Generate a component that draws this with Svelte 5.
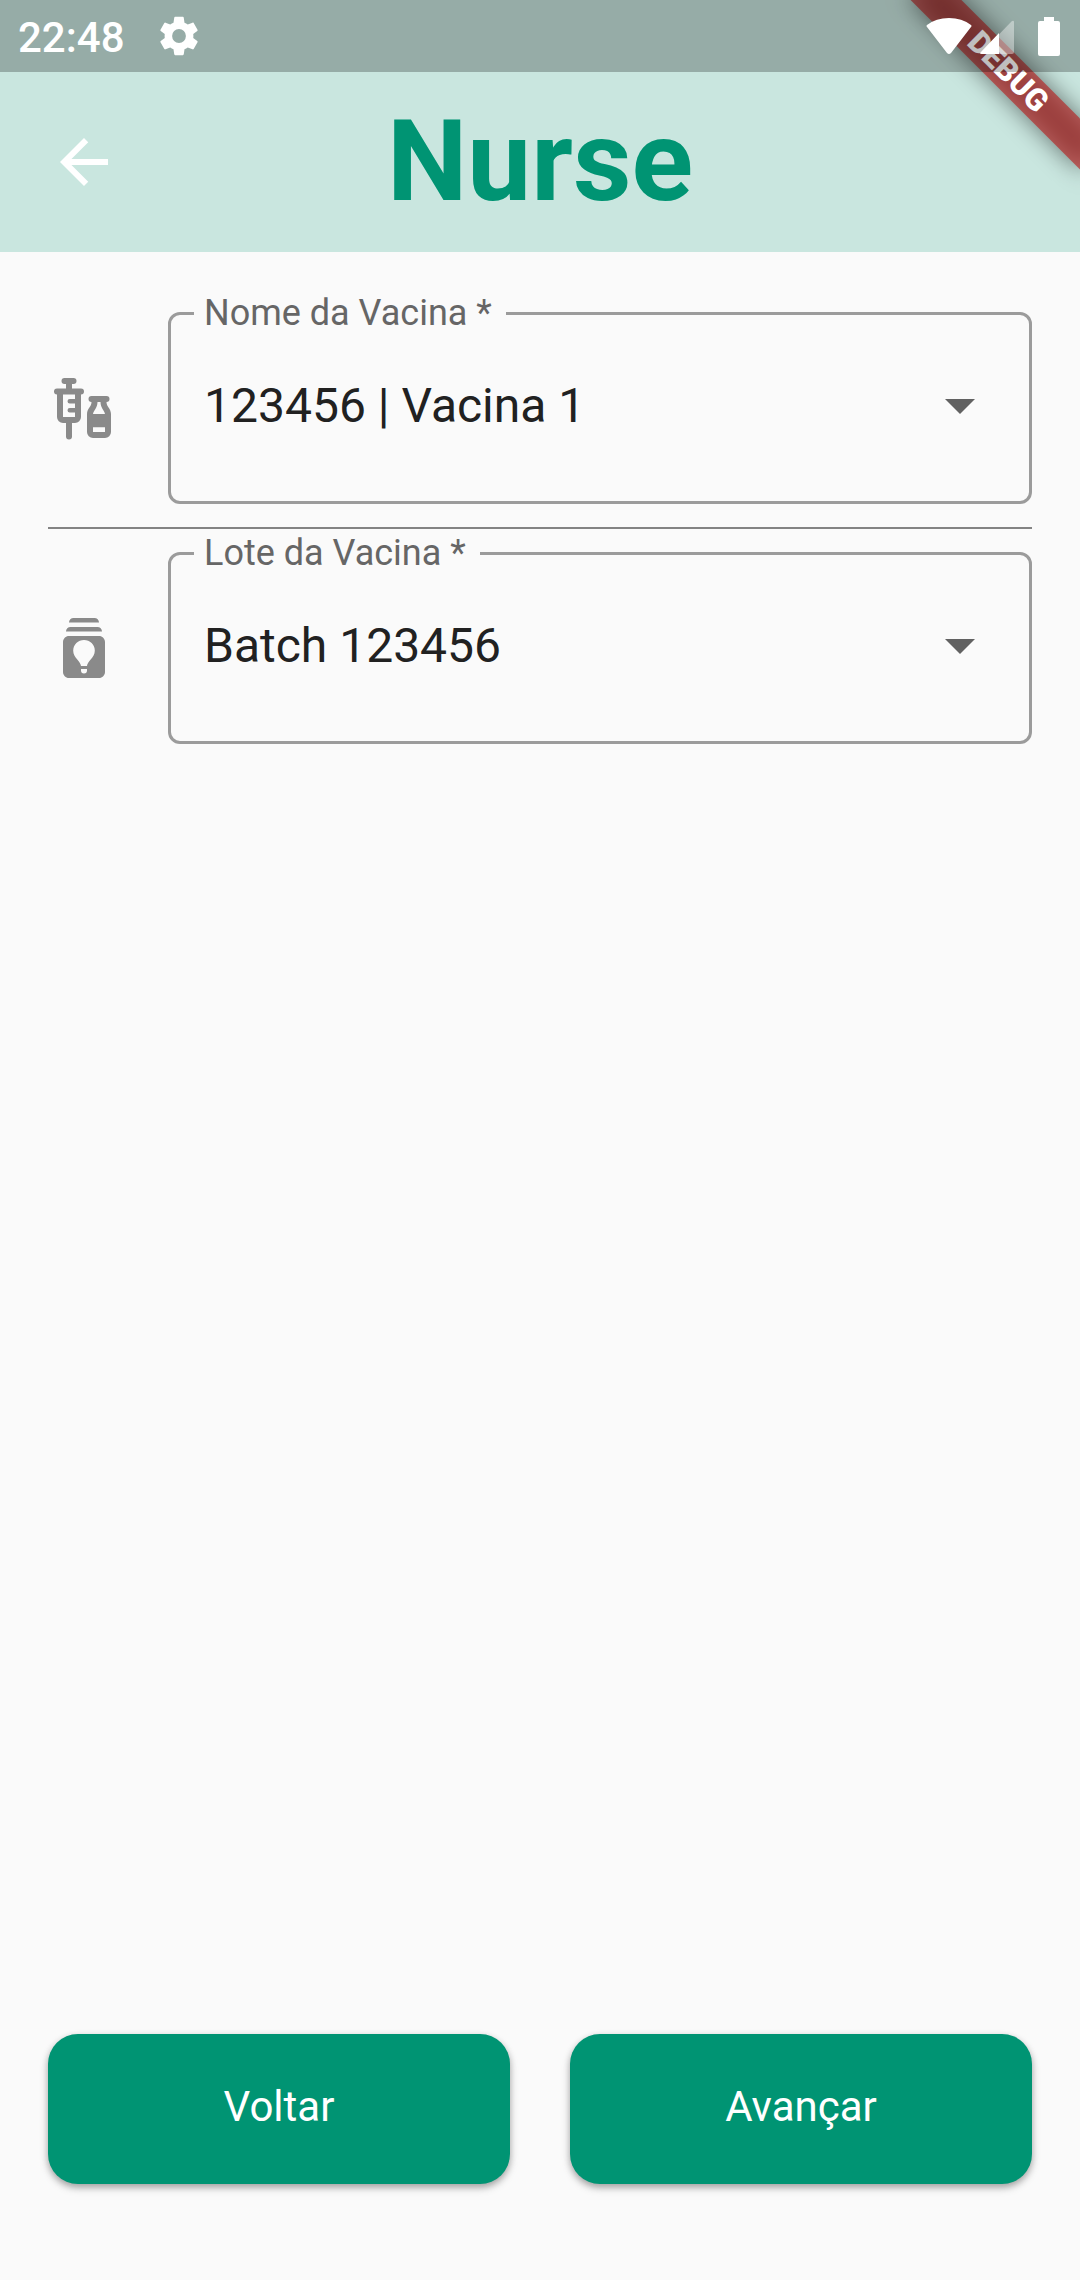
<script>
  const fields = [
    { id: 'vaccine', label: 'Nome da Vacina *', options: ['123456 | Vacina 1'] },
    { id: 'batch', label: 'Lote da Vacina *', options: ['Batch 123456'] }
  ];
</script>

<div class="page">
  <header>
    <div class="status">
      <span class="time">22:48</span>
      <svg class="gear" viewBox="0 0 24 24" aria-hidden="true">
        <path d="M19.43 12.98c.04-.32.07-.64.07-.98s-.03-.66-.07-.98l2.11-1.65c.19-.15.24-.42.12-.64l-2-3.46c-.12-.22-.39-.3-.61-.22l-2.49 1c-.52-.4-1.08-.73-1.69-.98l-.38-2.65A.49.49 0 0 0 14 2h-4c-.25 0-.46.18-.49.42l-.38 2.65c-.61.25-1.17.59-1.69.98l-2.49-1c-.23-.09-.49 0-.61.22l-2 3.46c-.13.22-.07.49.12.64l2.11 1.65c-.04.32-.07.65-.07.98s.03.66.07.98l-2.11 1.65c-.19.15-.24.42-.12.64l2 3.46c.12.22.39.3.61.22l2.49-1c.52.4 1.08.73 1.69.98l.38 2.65c.03.24.24.42.49.42h4c.25 0 .46-.18.49-.42l.38-2.65c.61-.25 1.17-.59 1.69-.98l2.49 1c.23.09.49 0 .61-.22l2-3.46c.12-.22.07-.49-.12-.64l-2.11-1.65zM12 15.6a3.6 3.6 0 1 1 0-7.2 3.6 3.6 0 0 1 0 7.2z" />
      </svg>
      <span class="grow"></span>
      <svg class="wifi" viewBox="0 0 46 36" aria-hidden="true">
        <path d="M1 7Q10 0 23 0t22 7q1 1 0 2L25 35q-2 2-4 0L1 9q-1-1 0-2z" />
      </svg>
      <svg class="signal" viewBox="0 0 34 34" aria-hidden="true">
        <path opacity=".4" d="M0 34 32 1q2-1 2 1v30q0 2-2 2z" />
        <path d="M19 13v21H2q-3 0-1-2z" />
      </svg>
      <svg class="battery" viewBox="0 0 22 39" aria-hidden="true">
        <path d="M6 0h10v4h4q2 0 2 2v31q0 2-2 2H2q-2 0-2-2V6q0-2 2-2h4z" />
      </svg>
    </div>
    <div class="appbar">
      <button class="back" aria-label="Voltar à tela anterior">
        <svg viewBox="0 0 24 24" aria-hidden="true">
          <path d="M20 11H7.83l5.59-5.59L12 4l-8 8 8 8 1.41-1.41L7.83 13H20z" />
        </svg>
      </button>
      <h1>Nurse</h1>
    </div>
    <div class="corner">
      <div class="ribbon">DEBUG</div>
    </div>
  </header>

  <main>
    {#each fields as field, i}
      {#if i > 0}<hr />{/if}
      <div class="row">
        {#if field.id === 'vaccine'}
          <svg class="lead" viewBox="0 0 24 24" aria-hidden="true">
            <path fill-rule="evenodd" d="M11 5.5H8V4h.5a1 1 0 0 0 0-2h-3a1 1 0 0 0 0 2H6v1.5H3a1 1 0 0 0 0 2V15a2 2 0 0 0 2 2h1v4.5a1 1 0 0 0 2 0V17h1a2 2 0 0 0 2-2V7.5a1 1 0 0 0 0-2zM9 9H7.25a.75.75 0 0 0 0 1.5H9V12H7.25a.75.75 0 0 0 0 1.5H9V15H5V7.5h4z" />
            <path fill-rule="evenodd" d="M19.5 10a1 1 0 0 0 0-2h-5a1 1 0 0 0 0 2c0 1.6-1.5 2.2-1.5 4v6a2 2 0 0 0 2 2h4a2 2 0 0 0 2-2v-6c0-1.8-1.5-2.4-1.5-4zm-3 0h1c0 2 1.2 2.6 1.5 4h-4c.3-1.4 1.5-2 1.5-4zM15 18.4h4V20h-4z" />
          </svg>
        {:else}
          <svg class="lead" viewBox="0 0 24 24" aria-hidden="true">
            <path d="M17 8H7c-1.1 0-2 .9-2 2v10c0 1.1.9 2 2 2h10c1.1 0 2-.9 2-2V10c0-1.1-.9-2-2-2zm-4 11.5a1 1 0 0 1-2 0V19h2zm0-1.5h-2c0-1.5-2.6-2.8-2.6-5.1a3.6 3.6 0 0 1 7.2 0c0 2.3-2.6 3.6-2.6 5.1zm5-11.5H6C6 5.67 6.67 5 7.5 5h9c.83 0 1.5.67 1.5 1.5zm-1-3H7C7 2.67 7.67 2 8.5 2h7c.83 0 1.5.67 1.5 1.5z" />
          </svg>
        {/if}
        <fieldset>
          <legend><label for={field.id}>{field.label}</label></legend>
          <div class="control">
            <select id={field.id}>
              {#each field.options as option}
                <option>{option}</option>
              {/each}
            </select>
            <svg viewBox="0 0 24 24" aria-hidden="true"><path d="m7 10 5 5 5-5z" /></svg>
          </div>
        </fieldset>
      </div>
    {/each}
  </main>

  <footer>
    <button>Voltar</button>
    <button>Avançar</button>
  </footer>
</div>

<style>
  :global(body) {
    margin: 0;
    background: #fafafa;
  }

  .page {
    display: flex;
    flex-direction: column;
    min-height: 100vh;
    font-family: Roboto, 'Liberation Sans', sans-serif;
  }

  svg {
    display: block;
    flex: none;
    fill: currentColor;
  }

  button {
    border: 0;
    font: inherit;
    cursor: pointer;
  }

  header {
    position: relative;
    background: #c9e6df;
  }

  /* Status bar: translucent, above the ribbon */
  .status {
    position: relative;
    z-index: 2;
    display: flex;
    align-items: center;
    height: 72px;
    padding: 0 20px 0 18px;
    background: rgba(0, 0, 0, 0.25);
    color: #fff;
  }

  .time {
    padding-top: 4px;
    font-size: 42px;
    font-weight: 500;
    line-height: 50px;
  }

  .gear {
    width: 46px;
    height: 46px;
    margin-left: 31px;
  }

  .grow {
    flex: 1;
  }

  .wifi {
    width: 46px;
    height: 36px;
  }

  .signal {
    width: 34px;
    height: 34px;
    margin: 2px 24px 0 8px;
  }

  .battery {
    width: 22px;
    height: 39px;
  }

  .appbar {
    display: grid;
    grid-template-columns: 72px 1fr 72px;
    align-items: center;
    height: 180px;
    padding: 0 48px;
  }

  .back {
    padding: 0;
    background: none;
    color: #fff;
  }

  .back svg {
    width: 72px;
    height: 72px;
  }

  h1 {
    margin: 0;
    padding-bottom: 2px;
    color: #009473;
    font-size: 114px;
    font-weight: 700;
    line-height: 134px;
    text-align: center;
  }

  .corner {
    position: absolute;
    top: 0;
    right: 0;
    z-index: 1;
    width: 252px;
    height: 252px;
    overflow: hidden;
    pointer-events: none;
  }

  .ribbon {
    position: absolute;
    top: 54px;
    right: -48px;
    width: 240px;
    height: 36px;
    transform: rotate(45deg);
    color: #fff;
    font-size: 31px;
    font-weight: 900;
    line-height: 36px;
    text-align: center;
  }

  .ribbon::before,
  .ribbon::after {
    content: '';
    position: absolute;
    inset: 0;
    z-index: -1;
    background: rgba(183, 28, 28, 0.63);
  }

  .ribbon::before {
    background: rgba(0, 0, 0, 0.5);
    filter: blur(12px);
  }

  main {
    flex: 1;
    padding: 40px 48px;
  }

  .row {
    display: flex;
    align-items: flex-end;
    gap: 48px;
  }

  .lead {
    width: 72px;
    height: 72px;
    margin-bottom: 60px;
    color: #8a8a8a;
  }

  fieldset {
    flex: 1;
    min-width: 0;
    margin: 0;
    padding: 34px 33px 60px 23px;
    border: 3px solid #9b9b9b;
    border-radius: 12px;
  }

  legend {
    padding: 0 14px 1px 10px;
    color: #666;
    font-size: 36px;
    line-height: 42px;
  }

  label {
    display: block;
  }

  .control {
    display: grid;
    grid-template-columns: 1fr 72px;
    color: #616161;
  }

  .control svg {
    grid-area: 1 / 2;
    width: 72px;
    height: 72px;
    pointer-events: none;
  }

  select {
    grid-area: 1 / 1 / 2 / 3;
    height: 72px;
    padding: 0 72px 0 10px;
    border: 0;
    background: none;
    appearance: none;
    color: #212121;
    font: inherit;
    font-size: 48px;
  }

  hr {
    height: 2px;
    margin: 23px 0 3px;
    border: 0;
    background: #838383;
  }

  footer {
    display: grid;
    grid-template-columns: 1fr 1fr;
    gap: 60px;
    padding: 0 48px 96px;
  }

  footer button {
    height: 150px;
    padding: 0 0 4px;
    border-radius: 30px;
    background: #009473;
    box-shadow:
      0 3px 6px rgba(0, 0, 0, 0.24),
      0 4px 10px rgba(0, 0, 0, 0.16);
    color: #fff;
    font-size: 42px;
    line-height: 50px;
  }
</style>
